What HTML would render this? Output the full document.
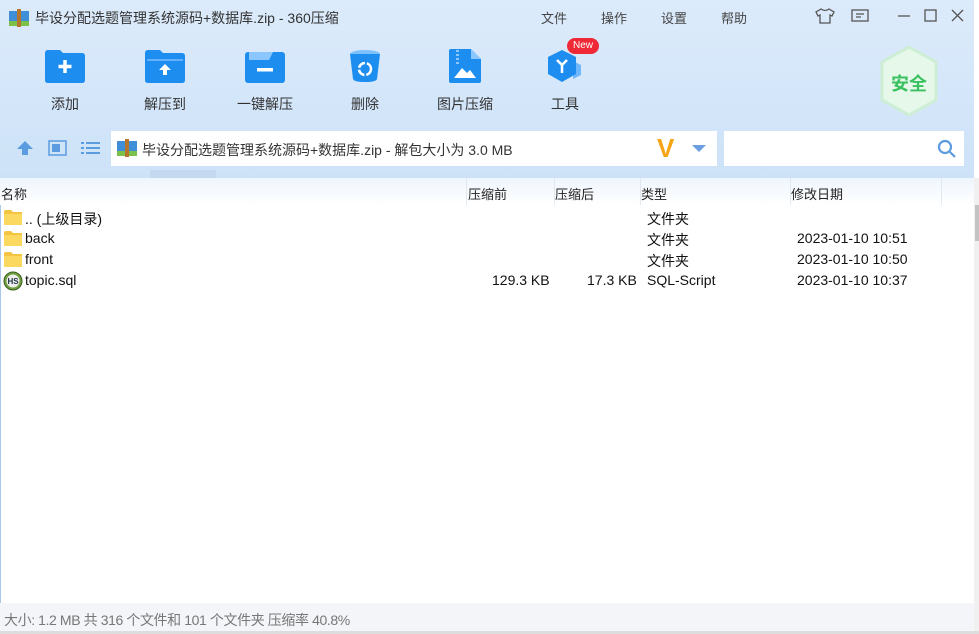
<!DOCTYPE html><html><head><meta charset="utf-8"><style>
*{margin:0;padding:0;box-sizing:border-box}
body{width:979px;height:634px;overflow:hidden;background:#fff;font-family:"Liberation Sans","Noto Sans CJK SC",sans-serif;position:relative;color:#222}
.top{position:absolute;left:0;top:0;width:974px;height:178px;background:linear-gradient(#dcebfb,#cde2f8)}
.abs{position:absolute}
.t{font-size:14px;color:#333}
.menu{font-size:13px;color:#444;top:8px}
.tb{position:absolute;top:49px;width:80px;text-align:center;font-size:14px;color:#333}
.tb svg{display:block;margin:0 auto 11px}
.row{position:absolute;left:0;height:21px;font-size:14px;color:#111;width:970px}
.row span{position:absolute;top:2px}
.hd{position:absolute;top:184px;font-size:13px;color:#222}
</style></head><body>
<div class="top"></div>
<svg class="abs" style="left:9px;top:9px" width="20" height="18"><rect x="0" y="2" width="20" height="14" fill="#3e8fd8"/><rect x="0" y="12" width="20" height="5" fill="#7cc04a"/><rect x="8" y="0" width="4" height="18" fill="#b5762c"/></svg>
<div class="abs t" style="left:35px;top:8px;font-size:14px">毕设分配选题管理系统源码+数据库.zip - 360压缩</div>
<div class="abs menu" style="left:541px">文件</div><div class="abs menu" style="left:601px">操作</div><div class="abs menu" style="left:661px">设置</div><div class="abs menu" style="left:721px">帮助</div>
<svg class="abs" style="left:815px;top:7px" width="20" height="18" fill="none" stroke="#555" stroke-width="1.3"><path d="M6 2L1 5l2 4 2-1v8h10V8l2 1 2-4-5-3q-4 3-8 0z"/></svg>
<svg class="abs" style="left:851px;top:9px" width="18" height="15" fill="none" stroke="#555" stroke-width="1.3"><rect x="1" y="1" width="16" height="11"/><path d="M5 5h8M5 8h5"/></svg>
<svg class="abs" style="left:896px;top:8px" width="70" height="16" fill="none" stroke="#555" stroke-width="1.3"><path d="M2 8h12"/><rect x="29" y="2" width="11" height="11"/><path d="M56 2l11 11M67 2L56 13"/></svg>
<div class="tb" style="left:25px"><svg width="40" height="34"><path d="M0 4q0-3 3-3h12l3 3h19q3 0 3 3v24q0 3-3 3H3q-3 0-3-3z" fill="#1d8ef0"/><path d="M20 11v13M13.5 17.5h13" stroke="#fff" stroke-width="3.5"/></svg>添加</div>
<div class="tb" style="left:125px"><svg width="40" height="34"><path d="M0 4q0-3 3-3h12l3 3h19q3 0 3 3v24q0 3-3 3H3q-3 0-3-3z" fill="#1d8ef0"/><path d="M2 11h36" stroke="#8cc6ff" stroke-width="1.2"/><path d="M20 15l-6 6h4v5h4v-5h4z" fill="#fff"/></svg>解压到</div>
<div class="tb" style="left:225px"><svg width="40" height="34"><rect x="0" y="3" width="40" height="31" rx="3" fill="#1d8ef0"/><path d="M4 3h24l-4 8H4z" fill="#8cc6ff"/><rect x="12" y="19" width="16" height="3.5" fill="#fff"/></svg>一键解压</div>
<div class="tb" style="left:325px"><svg width="34" height="34"><ellipse cx="17" cy="5" rx="15" ry="4" fill="#7cc0ff"/><path d="M2 5h30l-3 25q-1 3-12 3t-12-3z" fill="#1d8ef0"/><circle cx="17" cy="20" r="6" fill="none" stroke="#fff" stroke-width="2.5" stroke-dasharray="8 2"/></svg>删除</div>
<div class="tb" style="left:425px"><svg width="32" height="34"><path d="M0 2q0-2 2-2h20l10 10v22q0 2-2 2H2q-2 0-2-2z" fill="#1d8ef0"/><path d="M22 0v10h10z" fill="#8cc6ff"/><path d="M5 29l8-10 5 5 3-3 6 8z" fill="#fff"/><path d="M7 2h3M7 6h3M7 10h3M7 14h3" stroke="#8cc6ff" stroke-width="2"/></svg>图片压缩</div>
<div class="tb" style="left:525px"><svg width="40" height="34"><path d="M28 12l8 4v10l-8 4z" fill="#6fb8ff"/><path d="M17 1l14 7v17l-14 8-14-8V8z" fill="#1d8ef0"/><path d="M12 11l5 5 5-5M17 16v8" stroke="#fff" stroke-width="2.5" fill="none"/></svg>工具</div>
<div class="abs" style="left:567px;top:38px;width:32px;height:16px;background:#ef2a36;border-radius:8px;color:#fff;font-size:10px;text-align:center;line-height:16px">New</div>
<svg class="abs" style="left:879px;top:45px" width="60" height="74"><path d="M30 2l27 15v38L30 70 3 55V17z" fill="#e6f8ea" stroke="#cdeed5" stroke-width="3"/></svg>
<div class="abs" style="left:891px;top:70px;font-size:18px;font-weight:bold;color:#39c160">安全</div>
<svg class="abs" style="left:16px;top:140px" width="18" height="16"><path d="M9 1L1 9h5v6h6V9h5z" fill="#5b9be0"/></svg>
<svg class="abs" style="left:48px;top:140px" width="19" height="16"><rect x="1" y="1" width="17" height="14" fill="none" stroke="#5b9be0" stroke-width="1.5"/><rect x="4" y="4" width="8" height="8" fill="#5b9be0"/></svg>
<svg class="abs" style="left:81px;top:141px" width="19" height="14" fill="#5b9be0"><rect x="0" y="1" width="3" height="2"/><rect x="5" y="1" width="14" height="2"/><rect x="0" y="6" width="3" height="2"/><rect x="5" y="6" width="14" height="2"/><rect x="0" y="11" width="3" height="2"/><rect x="5" y="11" width="14" height="2"/></svg>
<div class="abs" style="left:111px;top:131px;width:606px;height:35px;background:#fff"></div>
<svg class="abs" style="left:117px;top:139px" width="20" height="18"><rect x="0" y="2" width="20" height="14" fill="#3e8fd8"/><rect x="0" y="12" width="20" height="5" fill="#7cc04a"/><rect x="8" y="0" width="4" height="18" fill="#b5762c"/></svg>
<div class="abs t" style="left:142px;top:140px">毕设分配选题管理系统源码+数据库.zip - 解包大小为 3.0 MB</div>
<div class="abs" style="left:657px;top:133px;font-size:26px;font-weight:bold;color:#f7a514">V</div>
<svg class="abs" style="left:692px;top:145px" width="14" height="8"><path d="M0 0h14L7 7z" fill="#6c9fe2"/></svg>
<div class="abs" style="left:724px;top:131px;width:240px;height:35px;background:#fff"></div>
<svg class="abs" style="left:937px;top:139px" width="20" height="20" fill="none" stroke="#5b9be0" stroke-width="2.2"><circle cx="8" cy="8" r="6"/><path d="M13 13l5 5"/></svg>
<div class="abs" style="left:0;top:178px;width:974px;height:27px;background:linear-gradient(#eef5fd,#fff)"></div>
<div class="abs" style="left:150px;top:170px;width:66px;height:8px;background:#c4d9f0"></div>
<div class="hd" style="left:1px">名称</div><div class="hd" style="left:468px">压缩前</div><div class="hd" style="left:555px">压缩后</div><div class="hd" style="left:641px">类型</div><div class="hd" style="left:791px">修改日期</div>
<div class="abs" style="left:466px;top:178px;width:1px;height:27px;background:#e2e8f0"></div><div class="abs" style="left:554px;top:178px;width:1px;height:27px;background:#e2e8f0"></div><div class="abs" style="left:640px;top:178px;width:1px;height:27px;background:#e2e8f0"></div><div class="abs" style="left:790px;top:178px;width:1px;height:27px;background:#e2e8f0"></div><div class="abs" style="left:941px;top:178px;width:1px;height:27px;background:#e2e8f0"></div>
<svg width="0" height="0" style="position:absolute"><defs><g id="f"><path d="M0 2q0-2 2-2h5l2 2h9v13H0z" fill="#f4c542"/><rect x="0" y="4" width="18" height="11" fill="#fbd860"/></g></defs></svg>
<div class="row" style="top:207px"><svg class="abs" style="left:4px;top:3px" width="18" height="15"><use href="#f"/></svg><span style="left:25px">.. (上级目录)</span><span style="left:647px">文件夹</span></div>
<div class="row" style="top:228px"><svg class="abs" style="left:4px;top:3px" width="18" height="15"><use href="#f"/></svg><span style="left:25px">back</span><span style="left:647px">文件夹</span><span style="left:797px">2023-01-10 10:51</span></div>
<div class="row" style="top:249px"><svg class="abs" style="left:4px;top:3px" width="18" height="15"><use href="#f"/></svg><span style="left:25px">front</span><span style="left:647px">文件夹</span><span style="left:797px">2023-01-10 10:50</span></div>
<div class="row" style="top:270px"><svg class="abs" style="left:3px;top:1px" width="20" height="20"><circle cx="10" cy="10" r="9" fill="#6e9e3e" stroke="#3b5f22"/><circle cx="10" cy="10" r="6.5" fill="#eee"/><text x="10" y="13" font-size="8" font-weight="bold" text-anchor="middle" fill="#234" font-family="Liberation Sans">HS</text></svg><span style="left:25px">topic.sql</span><span style="left:492px">129.3 KB</span><span style="left:587px">17.3 KB</span><span style="left:647px">SQL-Script</span><span style="left:797px">2023-01-10 10:37</span></div>
<div class="abs" style="left:974px;top:178px;width:5px;height:456px;background:#f0f0f0"></div>
<div class="abs" style="left:975px;top:205px;width:4px;height:36px;background:#c3c3c3"></div>
<div class="abs" style="left:0;top:205px;width:1px;height:398px;background:#a9c8ec"></div>
<div class="abs" style="left:0;top:603px;width:974px;height:28px;background:#f3f5f9"></div>
<div class="abs" style="left:4px;top:610px;font-size:14px;color:#777;letter-spacing:-0.4px">大小: 1.2 MB 共 316 个文件和 101 个文件夹 压缩率 40.8%</div>
<div class="abs" style="left:0;top:631px;width:979px;height:3px;background:#ddd"></div>
</body></html>
